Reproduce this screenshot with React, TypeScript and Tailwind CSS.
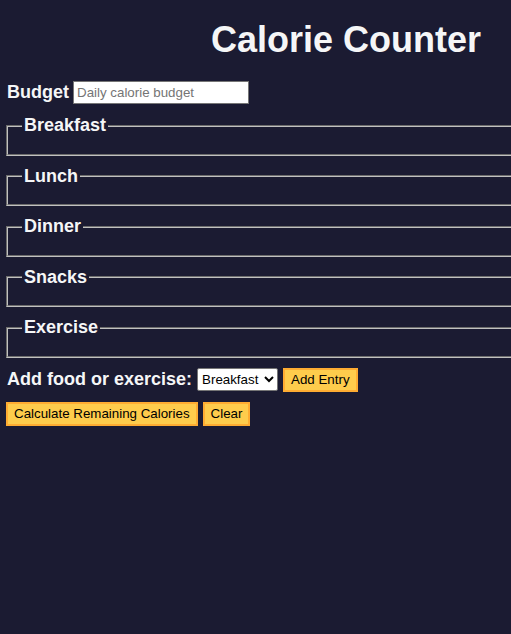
const meals = ["Breakfast", "Lunch", "Dinner", "Snacks", "Exercise"];

function Section({ name }: { name: string }) {
	return (
		<fieldset className="border-2 [border-style:groove] border-[#c0c0c0] pl-[14px] pr-3 pt-[6px] pb-[11.5px] mx-0">
			<legend className="px-[2px] text-[18px] font-bold">{name}</legend>
			<div className="h-0" />
		</fieldset>
	);
}

function Button({ children }: { children: React.ReactNode }) {
	return (
		<button
			type="button"
			className="h-[24px] px-[6px] text-[13.33px] text-black bg-[#fecc4c] border-2 border-[#feac32] cursor-pointer"
		>
			{children}
		</button>
	);
}

export default function App() {
	return (
		<div className="min-h-screen w-full overflow-hidden bg-[#1b1b32] text-[#f5f6f7] leading-[normal] font-['Liberation_Sans',Arial,sans-serif]">
			<main className="w-[692px] px-[6px]">
				<h1 className="pt-[19px] text-[36px] leading-[41px] font-bold text-center">
					Calorie Counter
				</h1>
				<form className="flex flex-col mt-[21px]" onSubmit={(e) => e.preventDefault()}>
					<div className="flex items-center gap-[4px] ml-px">
						<label htmlFor="budget" className="text-[18px] font-bold">
							Budget
						</label>
						<input
							id="budget"
							type="number"
							placeholder="Daily calorie budget"
							className="w-[176px] h-[23px] px-[3px] border border-[#767676] bg-white text-black text-[13.33px] placeholder:text-[#757575]"
						/>
					</div>
					<div className="flex flex-col gap-[10px] mt-[11px]">
						{meals.map((m) => (
							<Section key={m} name={m} />
						))}
					</div>
					<div className="flex items-center gap-[5px] mt-[10px]">
						<label htmlFor="entry-dropdown" className="text-[18px] font-bold ml-px">
							Add food or exercise:
						</label>
						<select
							id="entry-dropdown"
							className="w-[81px] h-[23px] bg-white text-black text-[13.33px] border border-[#767676] rounded-[2px]"
						>
							<option value="breakfast">Breakfast</option>
							<option value="lunch">Lunch</option>
							<option value="dinner">Dinner</option>
							<option value="snacks">Snacks</option>
							<option value="exercise">Exercise</option>
						</select>
						<Button>Add Entry</Button>
					</div>
					<div className="flex items-center gap-[5px] mt-[10px]">
						<Button>Calculate Remaining Calories</Button>
						<Button>Clear</Button>
					</div>
				</form>
			</main>
		</div>
	);
}
